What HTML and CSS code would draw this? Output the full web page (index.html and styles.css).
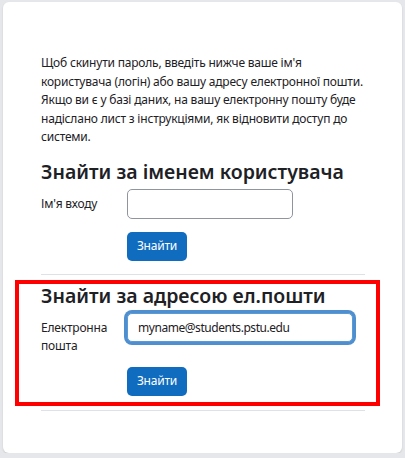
FILE: index.html
```html
<!DOCTYPE html>
<html lang="uk">
<head>
<meta charset="utf-8">
<title>Забули пароль</title>
<link rel="stylesheet" href="styles.css">
</head>
<body>
<main class="card">
  <p class="intro">Щоб скинути пароль, введіть нижче ваше ім'я<br>користувача (логін) або вашу адресу електронної пошти.<br>Якщо ви є у базі даних, на вашу електронну пошту буде<br>надіслано лист з інструкціями, як відновити доступ до<br>системи.</p>

  <section class="search">
    <h2 class="search-title">Знайти за іменем користувача</h2>
    <div class="field">
      <label class="field-label" for="username">Ім'я входу</label>
      <input class="field-input" id="username" type="text">
    </div>
    <div class="actions">
      <button class="btn" type="button">Знайти</button>
    </div>
  </section>

  <hr class="divider">

  <section class="search search-marked">
    <h2 class="search-title">Знайти за адресою ел.пошти</h2>
    <div class="field">
      <label class="field-label" for="email">Електронна пошта</label>
      <input class="field-input field-input-wide is-focused" id="email" type="text" value="myname@students.pstu.edu">
    </div>
    <div class="actions">
      <button class="btn" type="button">Знайти</button>
    </div>
  </section>

  <hr class="divider divider-last">
</main>
</body>
</html>
```

FILE: styles.css
```css
html, body {
  margin: 0;
  padding: 0;
}

body {
  background: #e6e7ea;
  font-family: "Noto Sans", "Open Sans", sans-serif;
  color: #1d2125;
  font-size: 12px;
  line-height: 18.5px;
  letter-spacing: -0.2px;
}

.card {
  box-sizing: border-box;
  width: 399px;
  height: 451px;
  margin: 2px 0 0 3px;
  padding: 52px 37px 0 38px;
  background: #fff;
  border-radius: 6px;
  box-shadow: 0 1px 2px rgba(0, 0, 0, 0.12);
}

.intro {
  margin: 0;
  white-space: nowrap;
}

.search-title {
  margin: 13px 0 5px;
  font-size: 19.5px;
  line-height: 24px;
  font-weight: 600;
  letter-spacing: 0;
}

.field {
  display: grid;
  grid-template-columns: 86px auto;
  align-items: start;
}

.field-label {
  padding-top: 6px;
  width: 70px;
}

.field-input {
  box-sizing: border-box;
  width: 166px;
  height: 30px;
  margin: 0;
  padding: 0 10px;
  border: 1px solid #8f959e;
  border-radius: 5px;
  font: inherit;
  letter-spacing: -0.45px;
  color: #1d2125;
  background: #fff;
}

.field-input-wide {
  width: 226px;
  height: 29px;
}

.field-input.is-focused {
  border-color: #5b9bd5;
  box-shadow: 0 0 0 3px #4f8fcf;
  outline: none;
}

.actions {
  margin-top: 13px;
  padding-left: 86px;
}

.btn {
  width: 60px;
  height: 29px;
  padding: 0;
  border: 0;
  border-radius: 5px;
  background: #0f6cbf;
  color: #fff;
  font: inherit;
  letter-spacing: inherit;
}

.divider {
  margin: 13px 0 0;
  border: 0;
  border-top: 1px solid #dee2e6;
}

.search-marked {
  margin: 5px -15px 0 -26px;
  padding: 0 11px 6px 22px;
  border: 4px solid #ff0000;
}

.search-marked .search-title {
  margin-top: 0;
}

.search-marked .actions {
  margin-top: 11px;
}

.divider-last {
  margin-top: 4px;
}
```
